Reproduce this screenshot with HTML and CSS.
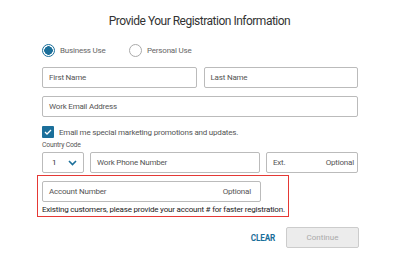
FILE: index.html
```html
<!DOCTYPE html>
<html>
<head>
    <title>Registration</title>
    <link rel="stylesheet" href="styles.css">
</head>
<body>
    <div class="form">
        <h1 class="title">Provide Your Registration Information</h1>
        <div class="radios">
            <label class="radio"><span class="dot on"></span>Business Use</label>
            <label class="radio"><span class="dot"></span>Personal Use</label>
        </div>
        <div class="row names">
            <div class="field">First Name</div>
            <div class="field">Last Name</div>
        </div>
        <div class="row">
            <div class="field wide">Work Email Address</div>
        </div>
        <label class="check">
            <span class="box">
                <svg width="8" height="6" viewBox="0 0 8 6"><path d="M1 3l2 2 4-4" fill="none" stroke="#fff" stroke-width="1.3"/></svg>
            </span>
            Email me special marketing promotions and updates.
        </label>
        <div class="cc-label">Country Code</div>
        <div class="row phone">
            <div class="field select">
                <span>1</span>
                <svg width="9" height="6" viewBox="0 0 9 6"><path d="M1 1l3.5 3.5L8 1" fill="none" stroke="#1b6f9a" stroke-width="1.6"/></svg>
            </div>
            <div class="field number">Work Phone Number</div>
            <div class="field ext"><span>Ext.</span><span>Optional</span></div>
        </div>
        <div class="account">
            <div class="field acct"><span>Account Number</span><span>Optional</span></div>
            <p class="hint">Existing customers, please provide your account # for faster registration.</p>
        </div>
        <div class="actions">
            <a class="clear">CLEAR</a>
            <button class="continue">Continue</button>
        </div>
    </div>
</body>
</html>
```

FILE: styles.css
```css
body {
    margin: 0;
    background: #fff;
    font-family: Roboto, "Liberation Sans", sans-serif;
    color: #333;
    letter-spacing: -0.2px;
}
.form {
    width: 316px;
    margin-left: 42px;
    display: flex;
    flex-direction: column;
}
.title {
    margin: 14px 0 0 -42px;
    width: 399px;
    text-align: center;
    font-size: 12px;
    font-weight: 400;
    line-height: 15px;
    letter-spacing: -0.5px;
    color: #333;
}
.radios {
    display: flex;
    margin-top: 15px;
    height: 13px;
}
.radio {
    display: flex;
    align-items: center;
    gap: 5px;
    font-size: 8px;
    color: #666;
    width: 87px;
}
.dot {
    width: 11px;
    height: 11px;
    border: 1px solid #aaa;
    border-radius: 50%;
    box-sizing: content-box;
}
.dot.on {
    border-color: #1b6f9a;
    background: radial-gradient(circle, #1b6f9a 0 4px, #fff 4.5px);
}
.row {
    display: flex;
    gap: 7px;
}
.names {
    margin-top: 10px;
}
.row + .row {
    margin-top: 8px;
}
.field {
    height: 21px;
    box-sizing: border-box;
    border: 1px solid #bbb;
    border-radius: 2px;
    display: flex;
    align-items: center;
    justify-content: space-between;
    padding: 0 5px 0 6px;
    font-size: 8px;
    color: #555;
    flex: 1;
}
.check {
    display: flex;
    align-items: center;
    gap: 5px;
    margin-top: 9px;
    font-size: 8px;
    color: #555;
}
.box {
    width: 12px;
    height: 12px;
    background: #1b6f9a;
    border-radius: 1px;
    display: flex;
    align-items: center;
    justify-content: center;
}
.cc-label {
    margin-top: 3px;
    font-size: 6.8px;
    color: #555;
    line-height: 9px;
}
.phone {
    margin-top: 2px;
    gap: 6px;
}
.select {
    flex: 0 0 42px;
    padding: 0 6px 0 9px;
    color: #333;
}
.number {
    flex: 0 0 170px;
}
.ext {
    flex: 1;
    padding-right: 3px;
}
.account {
    margin: 2px 0 0 -5px;
    width: 252px;
    height: 42px;
    box-sizing: border-box;
    border: 1px solid #e53935;
    padding: 5px 0 0 4px;
}
.acct {
    width: 219px;
    flex: none;
    padding-right: 9px;
}
.hint {
    margin: 3px 0 0 0;
    font-size: 8px;
    line-height: 10px;
    color: #222;
    white-space: nowrap;
}
.actions {
    display: flex;
    justify-content: flex-end;
    align-items: center;
    gap: 11px;
    margin-top: 10px;
    margin-right: -1px;
}
.clear {
    font-size: 8.2px;
    font-weight: 700;
    color: #1b6f9a;
}
.continue {
    width: 73px;
    height: 21px;
    border: 1px solid #ccc;
    border-radius: 2px;
    background: #ececec;
    color: #aaa;
    font-family: Roboto, "Liberation Sans", sans-serif;
    font-size: 8px;
}
```
